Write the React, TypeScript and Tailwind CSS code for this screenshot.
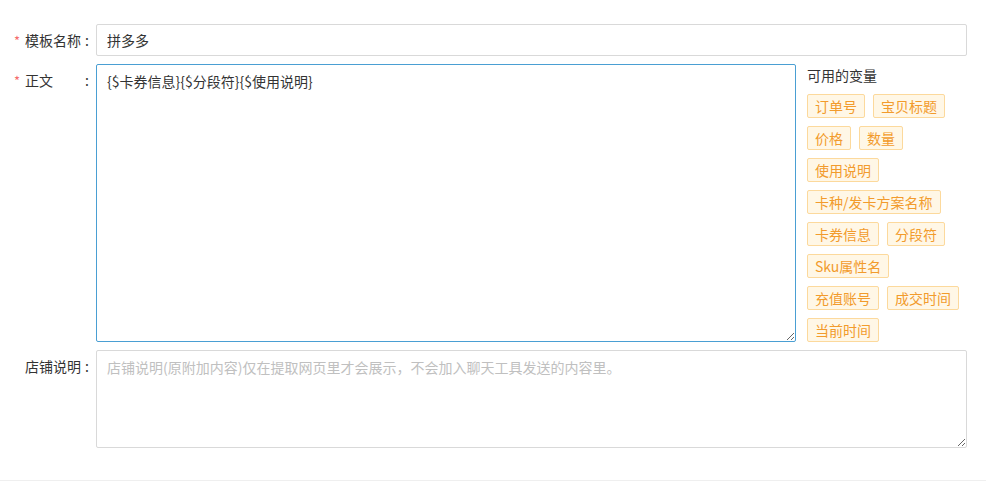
import React from "react";

const font = { fontFamily: '"Noto Sans CJK SC", "Noto Sans", sans-serif' };

const variables: string[][] = [
  ["订单号", "宝贝标题"],
  ["价格", "数量"],
  ["使用说明"],
  ["卡种/发卡方案名称"],
  ["卡券信息", "分段符"],
  ["Sku属性名"],
  ["充值账号", "成交时间"],
  ["当前时间"],
];

function Label({ text, required }: { text: string; required?: boolean }) {
  return (
    <div className="relative flex w-[96px] shrink-0 pl-[25px] text-[14px] leading-[20px] text-[#333]">
      {required && <span className="absolute left-[14px] top-[1px] text-[13px] text-[#f56c6c]">*</span>}
      <span className="w-[58px]">{text}</span>
      <span className="w-[8px] text-center">:</span>
    </div>
  );
}

export default function App() {
  return (
    <div className="min-h-[485px] bg-white" style={font}>
      <div className="flex flex-col gap-[8px] pr-[19px] pt-[24px]">
        {/* 模板名称 */}
        <div className="flex items-center">
          <Label text="模板名称" required />
          <input
            defaultValue="拼多多"
            className="h-[32px] flex-1 rounded-[2px] border border-[#d9d9d9] px-[10px] text-[14px] text-[#333] outline-none"
          />
        </div>

        {/* 正文 */}
        <div className="flex items-start">
          <div className="pt-[6px]">
            <Label text="正文" required />
          </div>
          <textarea
            defaultValue="{$卡券信息}{$分段符}{$使用说明}"
            className="h-[278px] w-[700px] rounded-[2px] border border-[#4a9fd3] px-[10px] py-[6px] text-[14px] leading-[20px] text-[#333] outline-none"
          />
          <div className="ml-[11px] w-[160px] pt-[1px]">
            <div className="text-[14px] leading-[20px] text-[#333]">可用的变量</div>
            <div className="mt-[9px] flex flex-col gap-[8px]">
              {variables.map((row, i) => (
                <div key={i} className="flex gap-[8px]">
                  {row.map((v) => (
                    <span
                      key={v}
                      className="flex h-[24px] items-center whitespace-nowrap rounded-[2px] border border-[#fcd99c] bg-[#fff7e6] px-[7px] text-[14px] text-[#f29b2c]"
                    >
                      {v}
                    </span>
                  ))}
                </div>
              ))}
            </div>
          </div>
        </div>

        {/* 店铺说明 */}
        <div className="flex items-start">
          <div className="pt-[6px]">
            <Label text="店铺说明" />
          </div>
          <textarea
            placeholder="店铺说明(原附加内容)仅在提取网页里才会展示，不会加入聊天工具发送的内容里。"
            className="h-[98px] flex-1 rounded-[2px] border border-[#d9d9d9] px-[10px] py-[6px] text-[14px] leading-[20px] text-[#333] outline-none placeholder:text-[#c0c0c0]"
          />
        </div>
      </div>
      <div className="mt-[32px] border-t border-[#efefef]" />
    </div>
  );
}
